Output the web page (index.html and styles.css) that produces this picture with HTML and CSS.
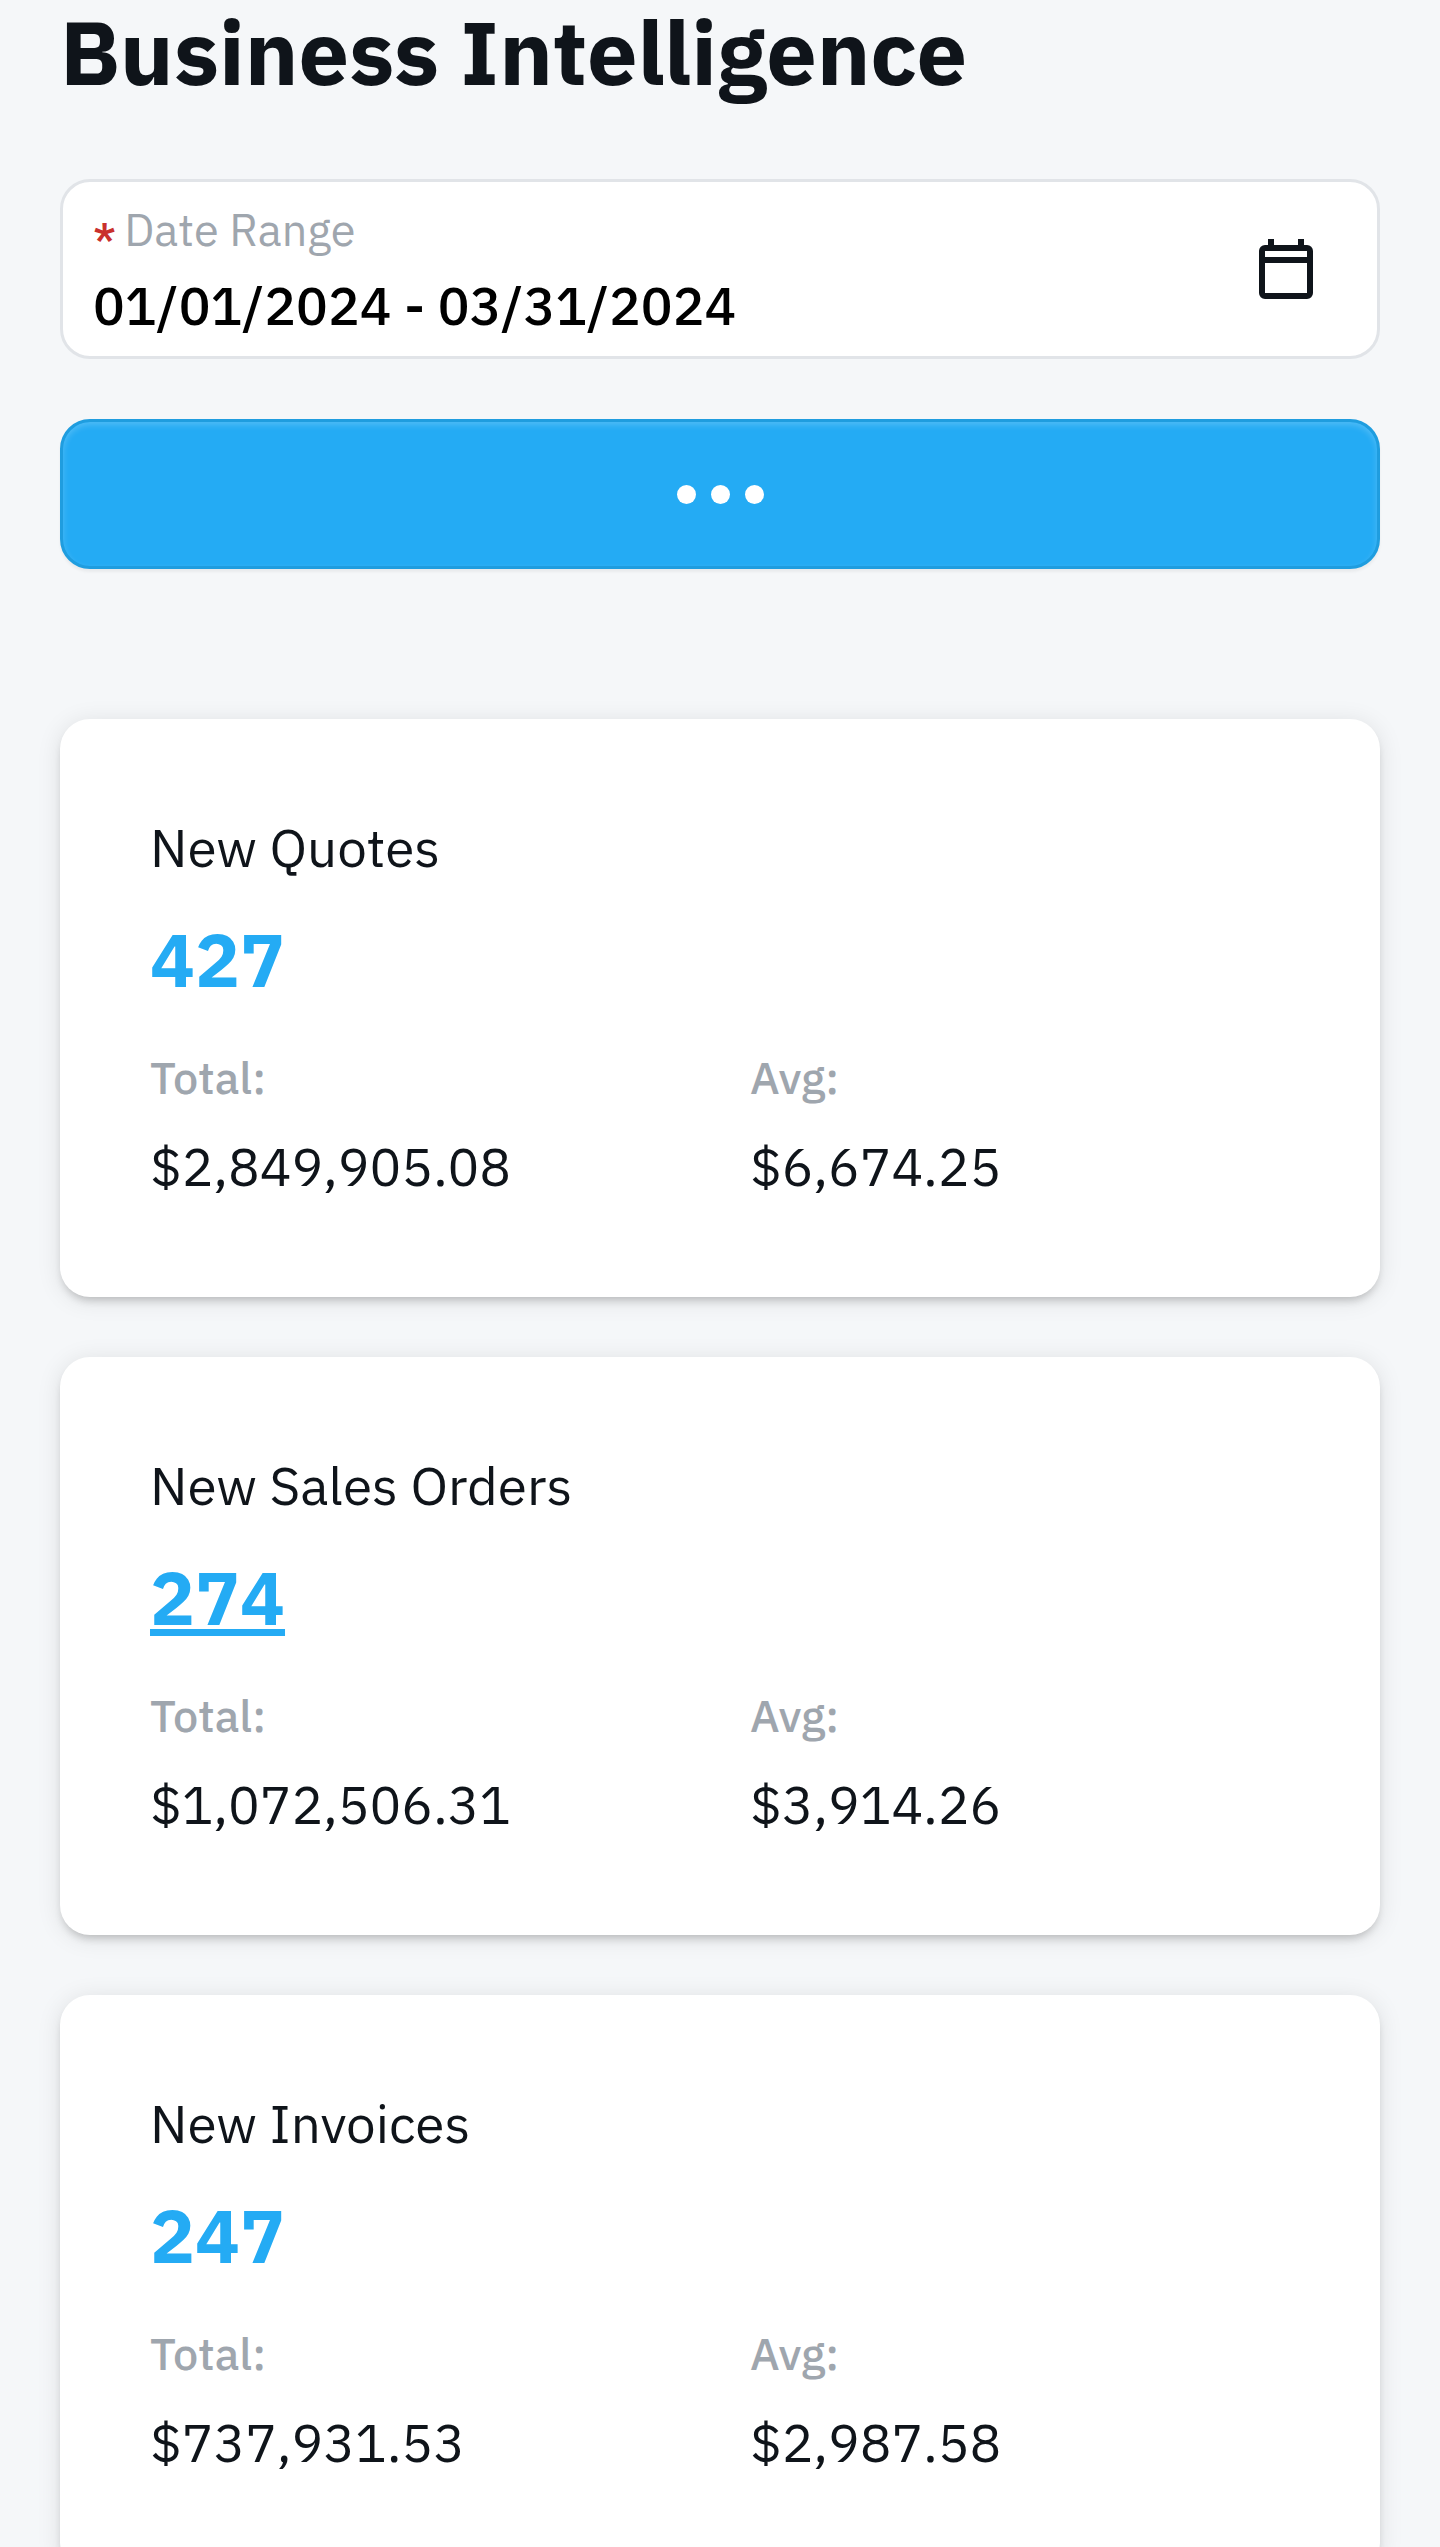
FILE: index.html
```html
<!DOCTYPE html>
<html lang="en">
<head>
    <meta charset="UTF-8">
    <meta name="viewport" content="width=device-width, initial-scale=1.0">
    <title>Business Intelligence</title>
    <link rel="stylesheet" href="styles.css">
</head>
<body>
    <main>
        <h1>Business Intelligence</h1>
        <form class="filters">
            <div class="date-field">
                <div class="date-text">
                    <label for="date-range"><span class="required">*</span>Date Range</label>
                    <input type="text" id="date-range" value="01/01/2024 - 03/31/2024">
                </div>
                <button type="button" class="calendar-button" aria-label="Open calendar">
                    <svg viewBox="0 0 24 24" fill="currentColor" aria-hidden="true">
                        <path fill-rule="evenodd" d="M6 2h2v2h8V2h2v2h1a2 2 0 0 1 2 2v14a2 2 0 0 1-2 2H5a2 2 0 0 1-2-2V6a2 2 0 0 1 2-2h1zM5 6v2h14V6zM5 10v10h14V10z"/>
                    </svg>
                </button>
            </div>
            <button type="button" class="submit-button" aria-label="Loading">
                <span class="dot"></span>
                <span class="dot"></span>
                <span class="dot"></span>
            </button>
        </form>
        <div class="cards">
            <section class="card">
                <h2>New Quotes</h2>
                <p class="count">427</p>
                <dl class="stats">
                    <div>
                        <dt>Total:</dt>
                        <dd>$2,849,905.08</dd>
                    </div>
                    <div>
                        <dt>Avg:</dt>
                        <dd>$6,674.25</dd>
                    </div>
                </dl>
            </section>
            <section class="card">
                <h2>New Sales Orders</h2>
                <p class="count"><a href="#sales-orders">274</a></p>
                <dl class="stats">
                    <div>
                        <dt>Total:</dt>
                        <dd>$1,072,506.31</dd>
                    </div>
                    <div>
                        <dt>Avg:</dt>
                        <dd>$3,914.26</dd>
                    </div>
                </dl>
            </section>
            <section class="card">
                <h2>New Invoices</h2>
                <p class="count">247</p>
                <dl class="stats">
                    <div>
                        <dt>Total:</dt>
                        <dd>$737,931.53</dd>
                    </div>
                    <div>
                        <dt>Avg:</dt>
                        <dd>$2,987.58</dd>
                    </div>
                </dl>
            </section>
        </div>
    </main>
</body>
</html>
```
FILE: styles.css
```css
:root {
    --primary-color: #24abf4;
    --primary-border: #1f9ddf;
    --text-color: #0f141a;
    --muted-color: #9fa6ae;
    --border-color: #e1e4e8;
    --background-color: #f5f7f9;
}
* {
    box-sizing: border-box;
}
body {
    margin: 0;
    font-family: "IBM Plex Sans", Roboto, sans-serif;
    background-color: var(--background-color);
    color: var(--text-color);
}
main {
    padding: 0 60px;
}
h1 {
    margin: 0 0 75px;
    font-size: 90px;
    line-height: 104px;
    font-weight: 700;
}
/* Filters */
.filters {
    display: flex;
    flex-direction: column;
    gap: 60px;
    margin-bottom: 150px;
}
.date-field {
    display: flex;
    align-items: center;
    padding: 0 30px;
    background-color: white;
    border: 3px solid var(--border-color);
    border-radius: 30px;
}
.date-text {
    flex: 1;
    display: flex;
    flex-direction: column;
    gap: 3px;
    padding: 13px 0 12px;
}
.date-text label {
    font-size: 45px;
    line-height: 68px;
    color: var(--muted-color);
}
.required {
    margin-right: 8px;
    font-weight: 500;
    line-height: 1;
    vertical-align: sub;
    color: #c9302c;
}
.date-text input {
    width: 100%;
    height: 78px;
    padding: 0;
    border: none;
    outline: none;
    background: none;
    font-family: inherit;
    font-size: 53px;
    font-weight: 500;
    color: black;
}
.calendar-button {
    padding: 25px;
    border: none;
    background: none;
    color: var(--text-color);
    cursor: pointer;
}
.calendar-button svg {
    display: block;
    width: 72px;
    height: 72px;
}
.submit-button {
    display: flex;
    align-items: center;
    justify-content: center;
    gap: 15px;
    height: 150px;
    border: 3px solid var(--primary-border);
    border-radius: 30px;
    background-color: var(--primary-color);
    box-shadow: inset 0 3px 6px rgba(255, 255, 255, 0.2), 0 3px 3px rgba(0, 0, 0, 0.05);
    cursor: pointer;
}
.dot {
    width: 19px;
    height: 19px;
    border-radius: 50%;
    background-color: white;
}
/* Cards */
.cards {
    display: flex;
    flex-direction: column;
    gap: 60px;
}
.card {
    padding: 90px;
    background-color: white;
    border-radius: 30px;
    box-shadow: 0 6px 9px -3px rgba(0, 0, 0, 0.2), 0 3px 24px rgba(0, 0, 0, 0.1);
}
.card h2 {
    margin: 0 0 22px;
    font-size: 53px;
    line-height: 78px;
    font-weight: 400;
}
.count {
    margin: 0 0 34px;
    font-size: 75px;
    line-height: 100px;
    font-weight: 700;
    color: var(--primary-color);
}
.count a {
    color: inherit;
    text-decoration-thickness: 7px;
    text-underline-offset: 4px;
}
.stats {
    display: grid;
    grid-template-columns: 1fr 1fr;
    gap: 60px;
    margin: 0;
}
.stats dt {
    margin-bottom: 16px;
    font-size: 45px;
    line-height: 68px;
    font-weight: 500;
    color: var(--muted-color);
}
.stats dd {
    margin: 0;
    font-size: 53px;
    line-height: 80px;
}
```
